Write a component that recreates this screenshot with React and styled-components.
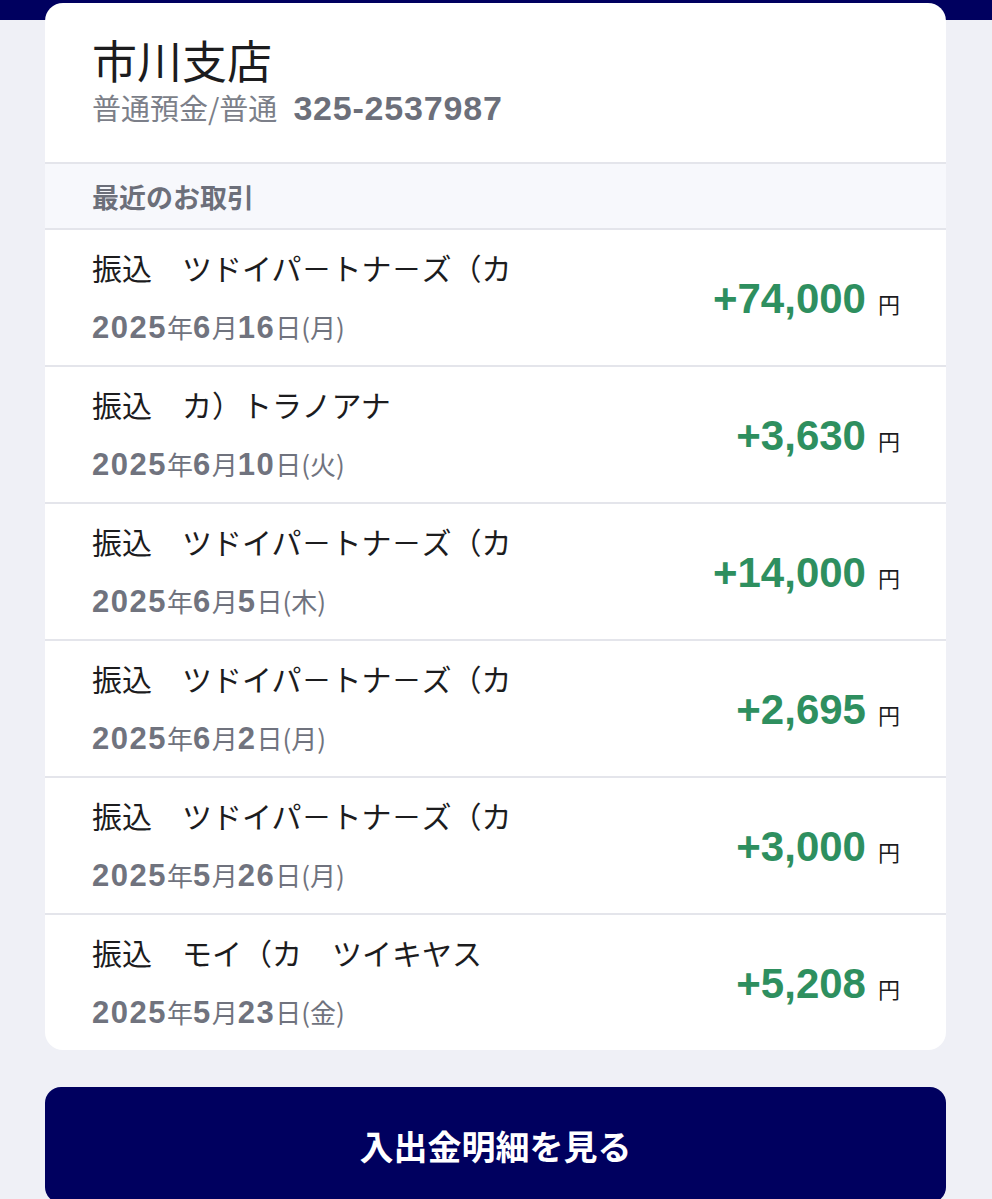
import React from "react";
import styled, { createGlobalStyle } from "styled-components";

const Global = createGlobalStyle`
  html, body { margin: 0; padding: 0; }
  body {
    background: #eff0f6;
    font-family: "Liberation Sans", "Noto Sans CJK JP", sans-serif;
    -webkit-font-smoothing: antialiased;
  }
`;

const Page = styled.div`
  padding: 3px 46px 40px 45px;
  background: linear-gradient(#00005f 0, #00005f 20px, #eff0f6 20px);
  display: flex;
  flex-direction: column;
  gap: 37px;
`;

const Card = styled.section`
  background: #ffffff;
  border-radius: 18px;
  overflow: hidden;
  display: flex;
  flex-direction: column;
`;

const Header = styled.header`
  padding: 30px 47px 34px;
  border-bottom: 2px solid #e4e5eb;
`;

const Title = styled.h1`
  margin: 0;
  font-family: "Noto Sans CJK JP", sans-serif;
  font-weight: 400;
  font-size: 45px;
  line-height: 54px;
  color: #1c1c1e;
`;

const Sub = styled.div`
  display: flex;
  align-items: baseline;
  gap: 16px;
  line-height: 40px;
`;

const SubLabel = styled.span`
  font-family: "Noto Sans CJK JP", sans-serif;
  font-size: 29px;
  color: #7c7f89;
`;

const AccountNo = styled.span`
  font-family: "Liberation Sans", sans-serif;
  font-weight: 700;
  font-size: 34px;
  letter-spacing: 0.8px;
  color: #6c6f7a;
`;

const SectionHead = styled.div`
  height: 64px;
  display: flex;
  align-items: center;
  padding: 0 47px;
  background: #f7f8fc;
  font-family: "Noto Sans CJK JP", sans-serif;
  font-weight: 700;
  font-size: 27px;
  color: #6c6f7a;
`;

const Row = styled.div`
  height: 135px;
  border-top: 2px solid #e4e5eb;
  padding: 0 46px 0 47px;
  display: flex;
  align-items: center;
  justify-content: space-between;
`;

const Left = styled.div`
  display: flex;
  flex-direction: column;
  gap: 20px;
  margin-top: 4px;
`;

const Name = styled.div`
  font-family: "Noto Sans CJK JP", sans-serif;
  font-size: 30px;
  line-height: 40px;
  color: #1c1c1e;
  white-space: pre;
`;

const DateLine = styled.div`
  line-height: 40px;
  color: #70737e;
  white-space: nowrap;
`;

const Num = styled.span`
  font-family: "Liberation Sans", sans-serif;
  font-weight: 700;
  font-size: 31px;
  letter-spacing: 1.5px;
`;

const Kanji = styled.span`
  font-family: "Noto Sans CJK JP", sans-serif;
  font-weight: 400;
  font-size: 26px;
`;

const Amount = styled.div`
  display: flex;
  align-items: baseline;
  gap: 12px;
  margin-top: 2px;
`;

const Value = styled.span`
  font-family: "Liberation Sans", sans-serif;
  font-weight: 700;
  font-size: 42px;
  color: #2e8f5f;
`;

const Yen = styled.span`
  font-family: "Noto Sans CJK JP", sans-serif;
  font-size: 22px;
  color: #1c1c1e;
`;

const Button = styled.button`
  height: 116px;
  border: none;
  border-radius: 16px;
  background: #00005f;
  color: #ffffff;
  font-family: "Noto Sans CJK JP", sans-serif;
  font-weight: 700;
  font-size: 34px;
  cursor: pointer;
  flex-shrink: 0;
`;

const rows = [
  { name: "振込　ツドイパ－トナ－ズ（カ", y: "2025", m: "6", d: "16", w: "月", amt: "+74,000" },
  { name: "振込　カ）トラノアナ", y: "2025", m: "6", d: "10", w: "火", amt: "+3,630" },
  { name: "振込　ツドイパ－トナ－ズ（カ", y: "2025", m: "6", d: "5", w: "木", amt: "+14,000" },
  { name: "振込　ツドイパ－トナ－ズ（カ", y: "2025", m: "6", d: "2", w: "月", amt: "+2,695" },
  { name: "振込　ツドイパ－トナ－ズ（カ", y: "2025", m: "5", d: "26", w: "月", amt: "+3,000" },
  { name: "振込　モイ（カ　ツイキヤス", y: "2025", m: "5", d: "23", w: "金", amt: "+5,208" },
];

export default function App() {
  return (
    <>
      <Global />
      <Page>
        <Card>
          <Header>
            <Title>市川支店</Title>
            <Sub>
              <SubLabel>普通預金/普通</SubLabel>
              <AccountNo>325-2537987</AccountNo>
            </Sub>
          </Header>
          <SectionHead>最近のお取引</SectionHead>
          {rows.map((r, i) => (
            <Row key={i}>
              <Left>
                <Name>{r.name}</Name>
                <DateLine>
                  <Num>{r.y}</Num>
                  <Kanji>年</Kanji>
                  <Num>{r.m}</Num>
                  <Kanji>月</Kanji>
                  <Num>{r.d}</Num>
                  <Kanji>日({r.w})</Kanji>
                </DateLine>
              </Left>
              <Amount>
                <Value>{r.amt}</Value>
                <Yen>円</Yen>
              </Amount>
            </Row>
          ))}
        </Card>
        <Button>入出金明細を見る</Button>
      </Page>
    </>
  );
}
